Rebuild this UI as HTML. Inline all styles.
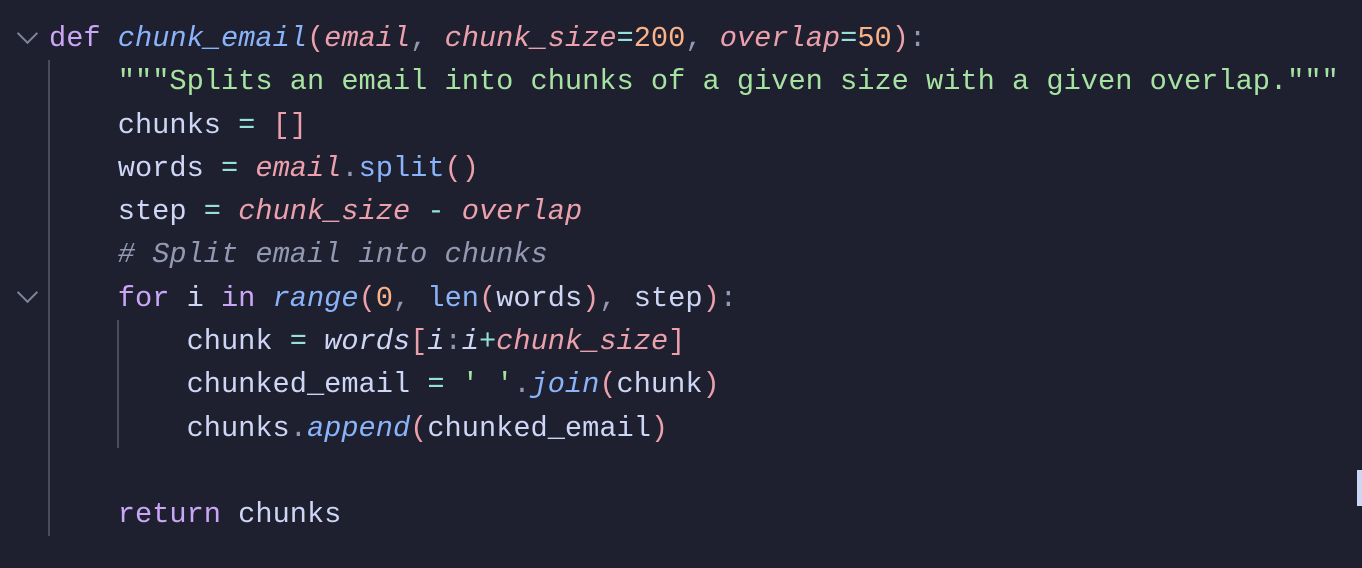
<!DOCTYPE html>
<html><head><meta charset="utf-8"><style>
html,body{margin:0;padding:0;background:#1e1f2f;width:1362px;height:568px;overflow:hidden}
pre{margin:0;position:absolute;left:49px;top:17px;font-family:"Liberation Mono",monospace;font-size:28.67px;line-height:43.3px;color:#cdd6f4;white-space:pre}
.k{color:#cba6f7}.f{color:#89b4fa}.i{font-style:italic}.p{color:#eba0ac}.n{color:#fab387}.s{color:#a6e3a1}.o{color:#94e2d5}.c{color:#9399b2;font-style:italic}.g{color:#9399b2}
.guide{position:absolute;width:2px;background:#4a4c5e}
.chev{position:absolute;left:20px;width:13px;height:13px;border-left:2px solid #7f849c;border-bottom:2px solid #7f849c;transform:rotate(-45deg)}
</style></head><body>
<div class="guide" style="left:48px;top:60px;height:476px"></div>
<div class="guide" style="left:117px;top:320px;height:128px"></div>
<div class="chev" style="top:26px"></div>
<div class="chev" style="top:285px"></div>
<div style="position:absolute;left:1357px;top:470px;width:5px;height:36px;background:#cdd6f4"></div>
<pre><span class="k">def</span> <span class="f i">chunk_email</span><span class="p">(</span><span class="p i">email</span><span class="g">,</span> <span class="p i">chunk_size</span><span class="o">=</span><span class="n">200</span><span class="g">,</span> <span class="p i">overlap</span><span class="o">=</span><span class="n">50</span><span class="p">)</span><span class="g">:</span>
    <span class="s">"""Splits an email into chunks of a given size with a given overlap."""</span>
    chunks <span class="o">=</span> <span class="p">[]</span>
    words <span class="o">=</span> <span class="p i">email</span><span class="g">.</span><span class="f">split</span><span class="p">()</span>
    step <span class="o">=</span> <span class="p i">chunk_size</span> <span class="o">-</span> <span class="p i">overlap</span>
    <span class="c"># Split email into chunks</span>
    <span class="k">for</span> i <span class="k">in</span> <span class="f i">range</span><span class="p">(</span><span class="n">0</span><span class="g">,</span> <span class="f">len</span><span class="p">(</span>words<span class="p">)</span><span class="g">,</span> step<span class="p">)</span><span class="g">:</span>
        chunk <span class="o">=</span> <span class="i">words</span><span class="p">[</span><span class="i">i</span><span class="g">:</span><span class="i">i</span><span class="o">+</span><span class="p i">chunk_size</span><span class="p">]</span>
        chunked_email <span class="o">=</span> <span class="s">' '</span><span class="g">.</span><span class="f i">join</span><span class="p">(</span>chunk<span class="p">)</span>
        chunks<span class="g">.</span><span class="f i">append</span><span class="p">(</span>chunked_email<span class="p">)</span>

    <span class="k">return</span> chunks</pre>
</body></html>
